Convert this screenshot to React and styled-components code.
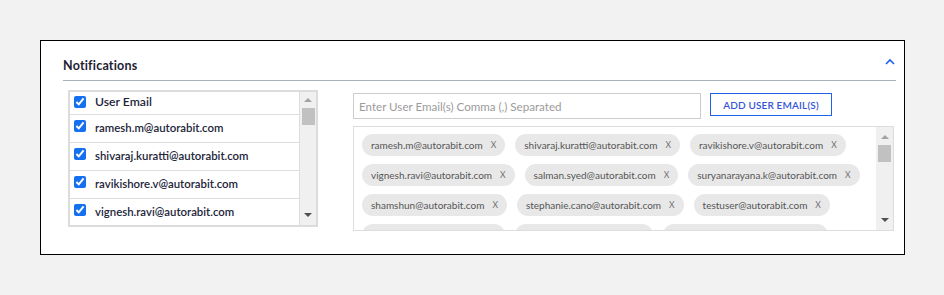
import React from "react";
import styled, { createGlobalStyle } from "styled-components";

const GlobalStyle = createGlobalStyle`
  html, body { margin: 0; padding: 0; background: #f2f2f2; }
  body { font-family: "Lato", "Roboto", sans-serif; }
  * { box-sizing: border-box; }
`;

const Page = styled.div`
  padding: 40px 0 0 40px;
  height: 295px;
`;

const Card = styled.section`
  width: 865px;
  height: 215px;
  background: #fff;
  border: 1px solid #000;
  padding: 0 8px 0 22px;
  overflow: hidden;
`;

const Header = styled.div`
  display: flex;
  align-items: center;
  justify-content: space-between;
  height: 40px;
  padding-top: 9px;
  border-bottom: 1px solid #a9b0bc;
`;

const Title = styled.h2`
  margin: 0;
  font-size: 12.5px;
  font-weight: 700;
  color: #1d2233;
  letter-spacing: 0.2px;
`;

const Chevron = styled.svg`
  width: 10px;
  height: 7px;
  margin: 0 1px 7px 0;
`;

const Body = styled.div`
  display: flex;
  align-items: flex-start;
  gap: 35px;
  padding-left: 5px;
`;

const UserList = styled.div`
  display: flex;
  width: 250px;
  height: 137px;
  margin-top: 9px;
  border: 2px solid #dcdcdc;
  overflow: hidden;
`;

const Rows = styled.div`
  flex: 1;
  overflow: hidden;
`;

const Row = styled.label`
  display: flex;
  align-items: flex-start;
  gap: 9px;
  height: ${(p) => (p.$head ? "23px" : "28px")};
  padding: ${(p) => (p.$head ? "1px" : "3px")} 0 0 4px;
  border-bottom: 1px solid #dddddd;
  font-size: ${(p) => (p.$head ? "12.2px" : "11.4px")};
  font-weight: 600;
  color: #23253a;
  line-height: 18px;
`;

const Check = styled.input`
  width: 12px;
  height: 12px;
  margin: ${(p) => (p.$head ? "3px" : "2px")} 0 0 0;
  accent-color: #1570ef;
  flex: none;
`;

const RowText = styled.span`
  padding-top: ${(p) => (p.$head ? "0" : "1px")};
`;

const Scrollbar = styled.div`
  flex: none;
  width: 17px;
  background: #f0f0f0;
  border-left: ${(p) => (p.$bordered ? "1px solid #dddddd" : "none")};
  display: flex;
  flex-direction: column;
  align-items: center;
`;

const Arrow = styled.div`
  width: 0;
  height: 0;
  border-left: 4px solid transparent;
  border-right: 4px solid transparent;
  ${(p) =>
    p.$up
      ? `border-bottom: 4px solid #a3a3a3; margin-top: ${p.$top}px;`
      : `border-top: 4px solid #505050; margin-top: auto; margin-bottom: ${p.$bottom}px;`}
`;

const Thumb = styled.div`
  width: 13px;
  height: ${(p) => p.$h}px;
  background: #c1c1c1;
  margin-top: ${(p) => p.$gap}px;
`;

const Right = styled.div`
  flex: 1;
  padding-top: 12px;
  display: flex;
  flex-direction: column;
  gap: 7px;
`;

const InputRow = styled.div`
  display: flex;
  align-items: flex-start;
  gap: 9px;
`;

const EmailInput = styled.input`
  width: 348px;
  height: 26px;
  border: 1px solid #cccccc;
  padding: 0 5px;
  font-family: inherit;
  font-size: 11.6px;
  color: #333;
  outline: none;
  &::placeholder { color: #9b9b9b; }
`;

const AddButton = styled.button`
  width: 122px;
  height: 23px;
  padding: 0;
  background: #fff;
  border: 1.5px solid #1f62ea;
  color: #3553d6;
  font-family: inherit;
  font-size: 10px;
  font-weight: 600;
  letter-spacing: 0.15px;
  cursor: pointer;
`;

const EmailBox = styled.div`
  display: flex;
  width: 541px;
  height: 105px;
  border: 1px solid #dddddd;
  overflow: hidden;
`;

const Chips = styled.div`
  flex: 1;
  display: flex;
  flex-wrap: wrap;
  align-content: flex-start;
  column-gap: 10px;
  row-gap: 8px;
  padding: 7px 8px;
  overflow: hidden;
`;

const Chip = styled.span`
  display: inline-flex;
  align-items: center;
  gap: 8px;
  height: 22px;
  padding: 0 9px;
  border-radius: 11px;
  background: #e8e8e8;
  color: #555555;
  font-size: 10px;
  white-space: nowrap;
`;

const ChipX = styled.span`
  font-size: 8.5px;
  color: #6f6f6f;
`;

const users = [
  "ramesh.m@autorabit.com",
  "shivaraj.kuratti@autorabit.com",
  "ravikishore.v@autorabit.com",
  "vignesh.ravi@autorabit.com",
  "salman.syed@autorabit.com",
];

const emails = [
  "ramesh.m@autorabit.com",
  "shivaraj.kuratti@autorabit.com",
  "ravikishore.v@autorabit.com",
  "vignesh.ravi@autorabit.com",
  "salman.syed@autorabit.com",
  "suryanarayana.k@autorabit.com",
  "shamshun@autorabit.com",
  "stephanie.cano@autorabit.com",
  "testuser@autorabit.com",
  "praveen.k@autorabit.com",
  "sandeep@autorabit.com",
  "madhavi.reddy@autorabit.com",
];

export default function App() {
  return (
    <>
      <GlobalStyle />
      <Page>
        <Card>
          <Header>
            <Title>Notifications</Title>
            <Chevron viewBox="0 0 10 7">
              <polyline points="1,6 5,2 9,6" fill="none" stroke="#1b5ff0" strokeWidth="1.6" />
            </Chevron>
          </Header>
          <Body>
            <UserList>
              <Rows>
                <Row $head>
                  <Check type="checkbox" defaultChecked $head />
                  <RowText $head>User Email</RowText>
                </Row>
                {users.map((u) => (
                  <Row key={u}>
                    <Check type="checkbox" defaultChecked />
                    <RowText>{u}</RowText>
                  </Row>
                ))}
              </Rows>
              <Scrollbar $bordered>
                <Arrow $up $top={6} />
                <Thumb $h={17} $gap={6} />
                <Arrow $bottom={8} />
              </Scrollbar>
            </UserList>
            <Right>
              <InputRow>
                <EmailInput placeholder="Enter User Email(s) Comma (,) Separated" />
                <AddButton>ADD USER EMAIL(S)</AddButton>
              </InputRow>
              <EmailBox>
                <Chips>
                  {emails.map((e, i) => (
                    <Chip key={i}>
                      {e}
                      <ChipX>X</ChipX>
                    </Chip>
                  ))}
                </Chips>
                <Scrollbar>
                  <Arrow $up $top={8} />
                  <Thumb $h={17} $gap={6} />
                  <Arrow $bottom={8} />
                </Scrollbar>
              </EmailBox>
            </Right>
          </Body>
        </Card>
      </Page>
    </>
  );
}
